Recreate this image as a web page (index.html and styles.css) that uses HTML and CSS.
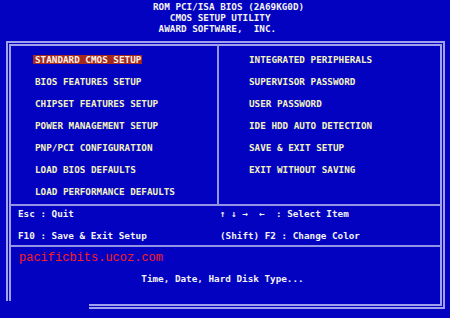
FILE: index.html
```html
<!DOCTYPE html>
<html>
<head>
    <title>CMOS Setup Utility</title>
    <link rel="stylesheet" href="styles.css">
</head>
<body>
    <pre class="header">ROM PCI/ISA BIOS (2A69KG0D)
   CMOS SETUP UTILITY
 AWARD SOFTWARE,  INC.</pre>
    <div class="frame">
        <div class="menu">
            <ul class="column left">
                <li><span class="selected">STANDARD CMOS SETUP</span></li>
                <li>BIOS FEATURES SETUP</li>
                <li>CHIPSET FEATURES SETUP</li>
                <li>POWER MANAGEMENT SETUP</li>
                <li>PNP/PCI CONFIGURATION</li>
                <li>LOAD BIOS DEFAULTS</li>
                <li>LOAD PERFORMANCE DEFAULTS</li>
            </ul>
            <ul class="column right">
                <li>INTEGRATED PERIPHERALS</li>
                <li>SUPERVISOR PASSWORD</li>
                <li>USER PASSWORD</li>
                <li>IDE HDD AUTO DETECTION</li>
                <li>SAVE &amp; EXIT SETUP</li>
                <li>EXIT WITHOUT SAVING</li>
            </ul>
        </div>
        <div class="keys">
            <span>Esc : Quit</span>
            <span>↑ ↓ →  ←  : Select Item</span>
            <span>F10 : Save &amp; Exit Setup</span>
            <span>(Shift) F2 : Change Color</span>
        </div>
        <div class="status">
            <p class="site">pacificbits.ucoz.com</p>
            <p class="hint">Time, Date, Hard Disk Type...</p>
        </div>
    </div>
</body>
</html>
```

FILE: styles.css
```css
body {
    margin: 0;
    background-color: #0202c0;
    font-family: "DejaVu Sans Mono", "Liberation Mono", monospace;
    font-size: 9.3px;
    font-weight: bold;
    height: 318px;
    overflow: hidden;
}
.header {
    margin: 0;
    padding: 1px 0 0 153px;
    font: inherit;
    line-height: 11px;
    color: #f2f2f2;
}
.frame {
    position: relative;
    box-sizing: border-box;
    width: 439px;
    height: 268px;
    margin: 7px 0 0 6px;
    border: 5px double #a0a0ec;
    display: flex;
    flex-direction: column;
}
/* the screenshot has the bottom-left corner of the frame cut away */
.frame::after {
    content: "";
    position: absolute;
    left: -6px;
    bottom: -6px;
    width: 84px;
    height: 9px;
    background-color: #0202c0;
}
.menu {
    display: flex;
    height: 158px;
    border-bottom: 2px solid #9494e6;
}
.column {
    list-style: none;
    margin: 0;
    padding: 3px 0 0 0;
    color: #f2f2c0;
}
.column li {
    line-height: 22px;
}
.left {
    width: 208px;
    padding-left: 24px;
    box-sizing: border-box;
    border-right: 2px solid #9494e6;
}
.right {
    padding-left: 30px;
}
.selected {
    display: inline-block;
    line-height: 9px;
    padding: 0 1px 0 2px;
    margin-left: -2px;
    background-color: #a42a1e;
    color: #f8eee6;
}
.keys {
    display: grid;
    grid-template-columns: 202px 1fr;
    row-gap: 11px;
    padding: 2px 0 4px 7px;
    line-height: 11px;
    color: #f2f2f2;
    white-space: pre;
    border-bottom: 2px solid #9494e6;
}
.status {
    flex: 1;
}
.site {
    margin: 0;
    padding: 4px 0 0 8px;
    font-family: "Liberation Mono", "Courier New", monospace;
    font-weight: normal;
    font-size: 12px;
    line-height: 14px;
    color: #ff1c1c;
}
.hint {
    margin: 8px 0 0 0;
    padding-right: 6px;
    line-height: 11px;
    text-align: center;
    color: #f2f2f2;
}
```
